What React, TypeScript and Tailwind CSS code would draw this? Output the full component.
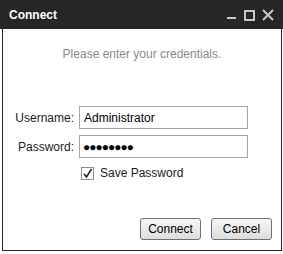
export default function App() {
  return (
    <div className="w-[283px] h-[254px] bg-white flex flex-col" style={{ fontFamily: '"Liberation Sans", Arial, sans-serif' }}>
      <div className="h-[29px] bg-[#262626] flex items-center pl-[9px] pr-[9px] shrink-0">
        <span className="text-white text-[12px] font-bold flex-1 pt-[1px]">Connect</span>
        <div className="flex items-center gap-[7px] pt-[1px]">
          <svg width="11" height="11" viewBox="0 0 11 11"><rect x="1" y="7" width="9" height="2" fill="#c8c8c8" /></svg>
          <svg width="11" height="11" viewBox="0 0 11 11"><rect x="1" y="1" width="9" height="9" fill="none" stroke="#c8c8c8" strokeWidth="2" /></svg>
          <svg width="12" height="12" viewBox="0 0 12 12"><path d="M1 1 L11 11 M11 1 L1 11" stroke="#c8c8c8" strokeWidth="2" /></svg>
        </div>
      </div>
      <div className="ml-[2px] mr-[1px] h-[222px] border border-t-0 border-[#262626] flex flex-col">
        <div className="text-center text-[12px] text-[#888888] mt-[16px]">Please enter your credentials.</div>
        <div className="mt-[43px] flex flex-col gap-[6px]">
          <div className="flex items-center">
            <span className="w-[71px] text-right text-[12px] text-[#1a1a1a]">Username:</span>
            <div className="ml-[5px] w-[169px] h-[23px] border border-[#a5a5a5] flex items-center px-[4px] text-[12px] text-black">Administrator</div>
          </div>
          <div className="flex items-center">
            <span className="w-[71px] text-right text-[12px] text-[#1a1a1a]">Password:</span>
            <div className="ml-[5px] w-[169px] h-[23px] border border-[#a5a5a5] flex items-center px-[3px] text-[12px] text-black tracking-[-1px]">●●●●●●●●</div>
          </div>
        </div>
        <div className="flex items-center ml-[78px] mt-[6px]">
          <div className="w-[13px] h-[13px] border border-[#8e8f8f] bg-white flex items-center justify-center">
            <svg width="11" height="11" viewBox="0 0 11 11"><path d="M2 6 L4.5 9 L9.5 1" fill="none" stroke="#222" strokeWidth="1.6" /></svg>
          </div>
          <span className="ml-[6px] text-[12px] text-[#1a1a1a]">Save Password</span>
        </div>
        <div className="flex-1" />
        <div className="flex justify-end gap-[10px] mr-[9px] mb-[10px]">
          <button className="w-[61px] h-[22px] rounded-[3px] border border-[#707070] bg-gradient-to-b from-[#f6f6f6] to-[#dddddd] text-[12px] text-black">Connect</button>
          <button className="w-[61px] h-[22px] rounded-[3px] border border-[#707070] bg-gradient-to-b from-[#f6f6f6] to-[#dddddd] text-[12px] text-black">Cancel</button>
        </div>
      </div>
    </div>
  );
}
